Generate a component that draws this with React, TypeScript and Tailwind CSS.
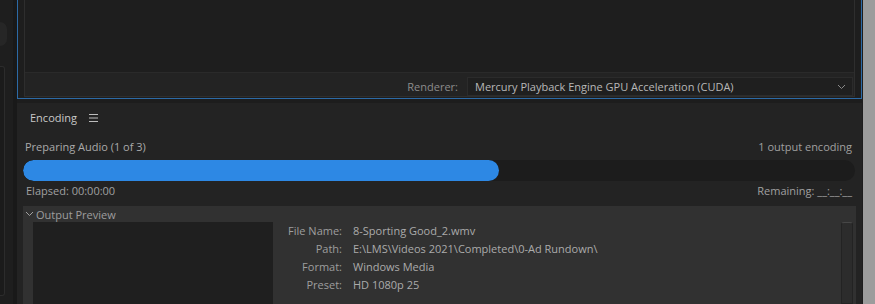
import React from "react";

const font = { fontFamily: '"Open Sans", "Noto Sans", sans-serif' };

function InfoRow({ label, value }: { label: string; value: string }) {
  return (
    <div className="flex h-[18px] items-center">
      <span className="w-[69px] text-right text-[#9e9e9e]">{label}</span>
      <span className="ml-[11px] text-[#ababab]">{value}</span>
    </div>
  );
}

export default function App() {
  return (
    <div
      className="flex h-[304px] w-[875px] overflow-hidden bg-[#1d1d1d] text-[11px] leading-none"
      style={font}
    >
      {/* left edge of neighbouring panel */}
      <div className="flex w-[17px] shrink-0">
        <div className="flex w-[13px] flex-col bg-[#1e1e1e]">
          <div className="mt-[22px] h-[24px] w-[7px] rounded-r-full bg-[#262626]" />
          <div className="mt-[20px] h-[230px] w-[5px] rounded-r-[3px] border-y border-r border-[#2c2c2c] bg-[#1b1b1b]" />
        </div>
        <div className="w-[4px] bg-[#191919]" />
      </div>

      {/* main column */}
      <div className="flex w-[845px] shrink-0 flex-col">
        {/* preview panel with focus border */}
        <div className="mt-[-2px] h-[101px] shrink-0 border border-[#2c6aa6] bg-[#1e1e1e] pl-[6px] pr-[6px] pb-[1px]">
          <div className="flex h-full flex-col border-x border-b border-[#2e2e2e]">
            <div className="flex-1 bg-[#1e1e1e]" />
            <div className="flex h-[24px] items-center justify-end border-t border-[#2a2a2a] bg-[#232323] pr-[1px] pt-[4px]">
              <span className="mr-[9px] text-[#8c8c8c]">Renderer:</span>
              <div className="flex h-[19px] w-[386px] items-center justify-between border border-[#2b2b2b] bg-[#1f1f1f] pl-[7px] pr-[6px] text-[#b8b8b8]">
                <span>Mercury Playback Engine GPU Acceleration (CUDA)</span>
                <svg width="9" height="6" viewBox="0 0 9 6" fill="none">
                  <path d="M1 1l3.5 3.5L8 1" stroke="#8a8a8a" strokeWidth="1" />
                </svg>
              </div>
            </div>
          </div>
        </div>

        {/* encoding panel */}
        <div className="mt-[4px] flex flex-1 flex-col bg-[#232323]">
          <div className="flex h-[27px] items-center pl-[13px] pt-[2px]">
            <span className="text-[#c8c8c8]">Encoding</span>
            <svg className="ml-[12px]" width="9" height="8" viewBox="0 0 9 8">
              <path d="M0 0.5h9M0 4h9M0 7.5h9" stroke="#bdbdbd" strokeWidth="1" />
            </svg>
          </div>

          <div className="mt-[11px] flex items-center justify-between pl-[8px] pr-[10px]">
            <span className="text-[#aaaaaa]">Preparing Audio (1 of 3)</span>
            <span className="text-[#a0a0a0]">1 output encoding</span>
          </div>

          <div className="ml-[6px] mr-[7px] mt-[8px] h-[21px] shrink-0 overflow-hidden rounded-full bg-[#1c1c1c]">
            <div className="h-full w-[476px] rounded-full bg-[#2d88e4]" />
          </div>

          <div className="mt-[4px] flex items-center justify-between pl-[9px] pr-[10px]">
            <span className="text-[#a0a0a0]">Elapsed: 00:00:00</span>
            <span className="text-[#a0a0a0]">Remaining: __:__:__</span>
          </div>

          {/* output preview */}
          <div className="ml-[6px] mr-[6px] mt-[10px] flex flex-1 flex-col bg-[#313131]">
            <div className="flex h-[16px] shrink-0 items-center pl-[2px]">
              <svg width="9" height="6" viewBox="0 0 9 6" fill="none">
                <path d="M1 1l3.5 3.5L8 1" stroke="#a0a0a0" strokeWidth="1" />
              </svg>
              <span className="ml-[2px] text-[#9e9e9e]">Output Preview</span>
            </div>
            <div className="flex flex-1">
              <div className="ml-[10px] w-[240px] bg-[#1f1f1f]" />
              <div className="flex flex-1">
                <div className="mt-[-1px] flex flex-1 flex-col">
                  <InfoRow label="File Name:" value="8-Sporting Good_2.wmv" />
                  <InfoRow label="Path:" value="E:\LMS\Videos 2021\Completed\0-Ad Rundown\" />
                  <InfoRow label="Format:" value="Windows Media" />
                  <InfoRow label="Preset:" value="HD 1080p 25" />
                </div>
                <div className="mr-[3px] w-[12px] rounded-t-[3px] border border-[#232323] border-t-[#474747] bg-[#2c2c2c]" />
              </div>
            </div>
          </div>
        </div>
      </div>

      {/* right edge */}
      <div className="w-[1px] bg-[#1d1d1d]" />
      <div className="flex-1 bg-[#9c9c9c]" />
    </div>
  );
}
